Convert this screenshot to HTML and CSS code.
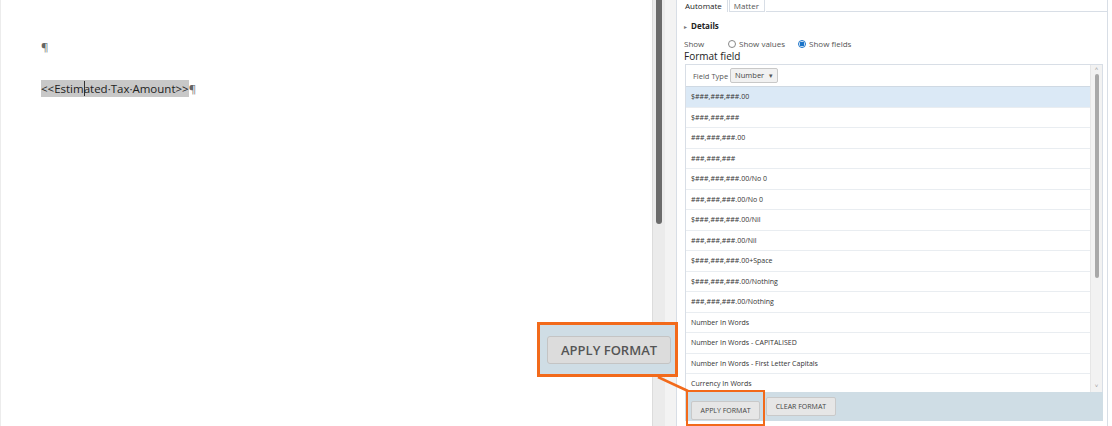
FILE: index.html
```html
<!DOCTYPE html>
<html>
<head>
<meta charset="utf-8">
<link rel="stylesheet" href="styles.css">
</head>
<body>
<div class="app">
  <div class="doc">
    <p class="para mark">¶</p>
    <p class="para field"><span class="hl">&lt;&lt;Estim<span class="caret"></span>ated·Tax·Amount&gt;&gt;</span><span class="mark">¶</span></p>
  </div>
  <div class="vscroll"><div class="vthumb"></div></div>
  <div class="gutter"></div>
  <div class="panel">
    <div class="tabs">
      <div class="tab active">Automate</div>
      <div class="tab">Matter</div>
      <div class="tabfill"></div>
    </div>
    <div class="content">
      <div class="details"><span class="tri">▸</span><b>Details</b></div>
      <div class="show">
        <span class="showlbl">Show</span>
        <span class="radio"></span><span class="rlbl">Show values</span>
        <span class="radio on"></span><span class="rlbl">Show fields</span>
      </div>
      <div class="fmt">Format field</div>
      <div class="listbox">
        <div class="listmain">
          <div class="ftype">Field Type <span class="select">Number <span class="caretdn">▾</span></span></div>
          <div class="row sel">$###,###,###.00</div>
          <div class="row">$###,###,###</div>
          <div class="row">###,###,###.00</div>
          <div class="row">###,###,###</div>
          <div class="row">$###,###,###.00/No 0</div>
          <div class="row">###,###,###.00/No 0</div>
          <div class="row">$###,###,###.00/Nil</div>
          <div class="row">###,###,###.00/Nil</div>
          <div class="row">$###,###,###.00+Space</div>
          <div class="row">$###,###,###.00/Nothing</div>
          <div class="row">###,###,###.00/Nothing</div>
          <div class="row">Number In Words</div>
          <div class="row">Number In Words - CAPITALISED</div>
          <div class="row">Number In Words - First Letter Capitals</div>
          <div class="row last">Currency In Words</div>
        </div>
        <div class="lscroll">
          <span class="arr">&#708;</span>
          <div class="lthumb"></div>
          <span class="arr dn">&#709;</span>
        </div>
      </div>
      <div class="btnbar">
        <div class="btnwrap"><span class="btn">APPLY FORMAT</span></div>
        <span class="btn">CLEAR FORMAT</span>
      </div>
    </div>
  </div>
</div>
<div class="callout"><span class="bigbtn">APPLY FORMAT</span></div>
<svg class="connector" width="40" height="24" viewBox="0 0 40 24"><line x1="2" y1="1" x2="32" y2="15" stroke="#f26a1b" stroke-width="2.5"/></svg>
</body>
</html>
```
FILE: styles.css
```css
html, body {
  margin: 0;
  padding: 0;
  background: #fff;
  width: 1112px;
  height: 426px;
  overflow: hidden;
  font-family: "Open Sans", "Liberation Sans", sans-serif;
  color: #333;
}
.app {
  display: flex;
  height: 426px;
}
.doc {
  width: 652px;
  border-left: 1px solid #ececec;
  box-sizing: border-box;
  padding: 39px 0 0 40px;
}
.para {
  margin: 0;
  font-size: 11.5px;
  line-height: 16px;
  font-family: "Open Sans", "Liberation Sans", sans-serif;
  color: #222;
}
.mark { color: #666; }
.para.field { margin-top: 26px; }
.hl {
  background: #c8c8c8;
  padding: 1px 0;
  position: relative;
}
.caret {
  display: inline-block;
  width: 1px;
  height: 15px;
  background: #333;
  vertical-align: -3px;
  margin: 0 -1px 0 0;
}
.vscroll {
  width: 12px;
  background: #ebebeb;
  border-left: 1px solid #dcdcdc;
  display: flex;
  justify-content: center;
}
.vthumb {
  width: 6px;
  height: 224px;
  background: #6b6b6b;
  border-radius: 0 0 3px 3px;
}
.gutter {
  width: 11px;
  background: #f3f3f3;
  border-right: 1px solid #d8dee6;
}
.panel {
  width: 430px;
  border-right: 1px solid #d8dee6;
  display: flex;
  flex-direction: column;
}
.tabs {
  display: flex;
  height: 12px;
  padding-left: 4px;
}
.tab {
  font-size: 8px;
  line-height: 11px;
  padding: 0 5px 0 4px;
  color: #555;
  border: 1px solid #d8dee6;
  border-top: none;
  margin-right: 1px;
}
.tab.active {
  color: #222;
  border-bottom: none;
  background: #fff;
  border-left: none;
}
.tabfill {
  flex: 1;
  border-bottom: 1px solid #d8dee6;
}
.content {
  padding: 0 0 0 7px;
  display: flex;
  flex-direction: column;
}
.details {
  margin-top: 8px;
  font-size: 8px;
  line-height: 11px;
  color: #222;
}
.tri {
  font-size: 6px;
  color: #777;
  margin-right: 4px;
}
.show {
  margin-top: 5px;
  display: flex;
  align-items: center;
  font-size: 8px;
  line-height: 11px;
  color: #555;
}
.showlbl { width: 44px; }
.radio {
  width: 8px;
  height: 8px;
  border: 1px solid #888;
  border-radius: 50%;
  box-sizing: border-box;
  margin-right: 3px;
  background: #fff;
}
.radio.on {
  border-color: #1a73c8;
  background: radial-gradient(circle, #1a73c8 0 2.2px, #fff 2.6px);
}
.rlbl { margin-right: 13px; }
.fmt {
  font-size: 10px;
  line-height: 12px;
  margin-top: 1px;
  color: #222;
}
.listbox {
  margin-top: 2px;
  margin-left: 1px;
  width: 418px;
  height: 328px;
  border: 1px solid #d8dee6;
  border-bottom: none;
  box-sizing: border-box;
  display: flex;
}
.listmain { flex: 1; }
.ftype {
  height: 21px;
  display: flex;
  align-items: center;
  padding-left: 7px;
  font-size: 7.5px;
  color: #555;
}
.select {
  margin-left: 2px;
  border: 1px solid #c8c8c8;
  background: #f1f1f1;
  border-radius: 2px;
  padding: 1px 4px;
  font-size: 7.5px;
  color: #444;
  line-height: 10px;
}
.caretdn { margin-left: 3px; font-size: 7px; color: #555; }
.row {
  height: 20.5px;
  box-sizing: border-box;
  border-top: 1px solid #e9edf1;
  padding-left: 5px;
  font-size: 7px;
  line-height: 19.5px;
  color: #333;
}
.row.sel {
  background: #dbe9f6;
  border-top-color: #cfd9e3;
}
.lscroll {
  width: 11px;
  background: #f2f2f2;
  border-left: 1px solid #e6e6e6;
  display: flex;
  flex-direction: column;
  align-items: center;
}
.arr {
  font-size: 6px;
  color: #999;
  line-height: 8px;
  height: 8px;
}
.arr.dn { margin-top: auto; margin-bottom: 2px; }
.lthumb {
  width: 4px;
  height: 204px;
  background: #a8a8a8;
  border-radius: 2px;
  margin-top: 1px;
}
.btnbar {
  margin-left: 1px;
  width: 418px;
  height: 29px;
  background: #cfdde5;
  display: flex;
  align-items: center;
  padding-left: 1px;
  box-sizing: border-box;
}
.btnwrap {
  border: 2.5px solid #f26a1b;
  padding: 4px 3px;
  margin-right: 1px;
  margin-top: 2px;
}
.btn {
  display: inline-block;
  background: #e6e6e6;
  border: 1px solid #c9c9c9;
  border-radius: 2px;
  font-size: 7px;
  color: #444;
  padding: 4px 8.5px;
  line-height: 9px;
}
.callout {
  position: absolute;
  left: 537px;
  top: 322px;
  width: 141px;
  height: 55px;
  box-sizing: border-box;
  border: 3px solid #f26a1b;
  background: #cfdde5;
  display: flex;
  align-items: center;
  padding-left: 7px;
}
.bigbtn {
  display: inline-block;
  background: #dcdcdc;
  border: 1px solid #c4c4c4;
  border-radius: 3px;
  font-size: 13px;
  font-weight: 600;
  color: #555;
  padding: 5px 13px;
  line-height: 16px;
}
.connector {
  position: absolute;
  left: 656px;
  top: 376px;
}
```
